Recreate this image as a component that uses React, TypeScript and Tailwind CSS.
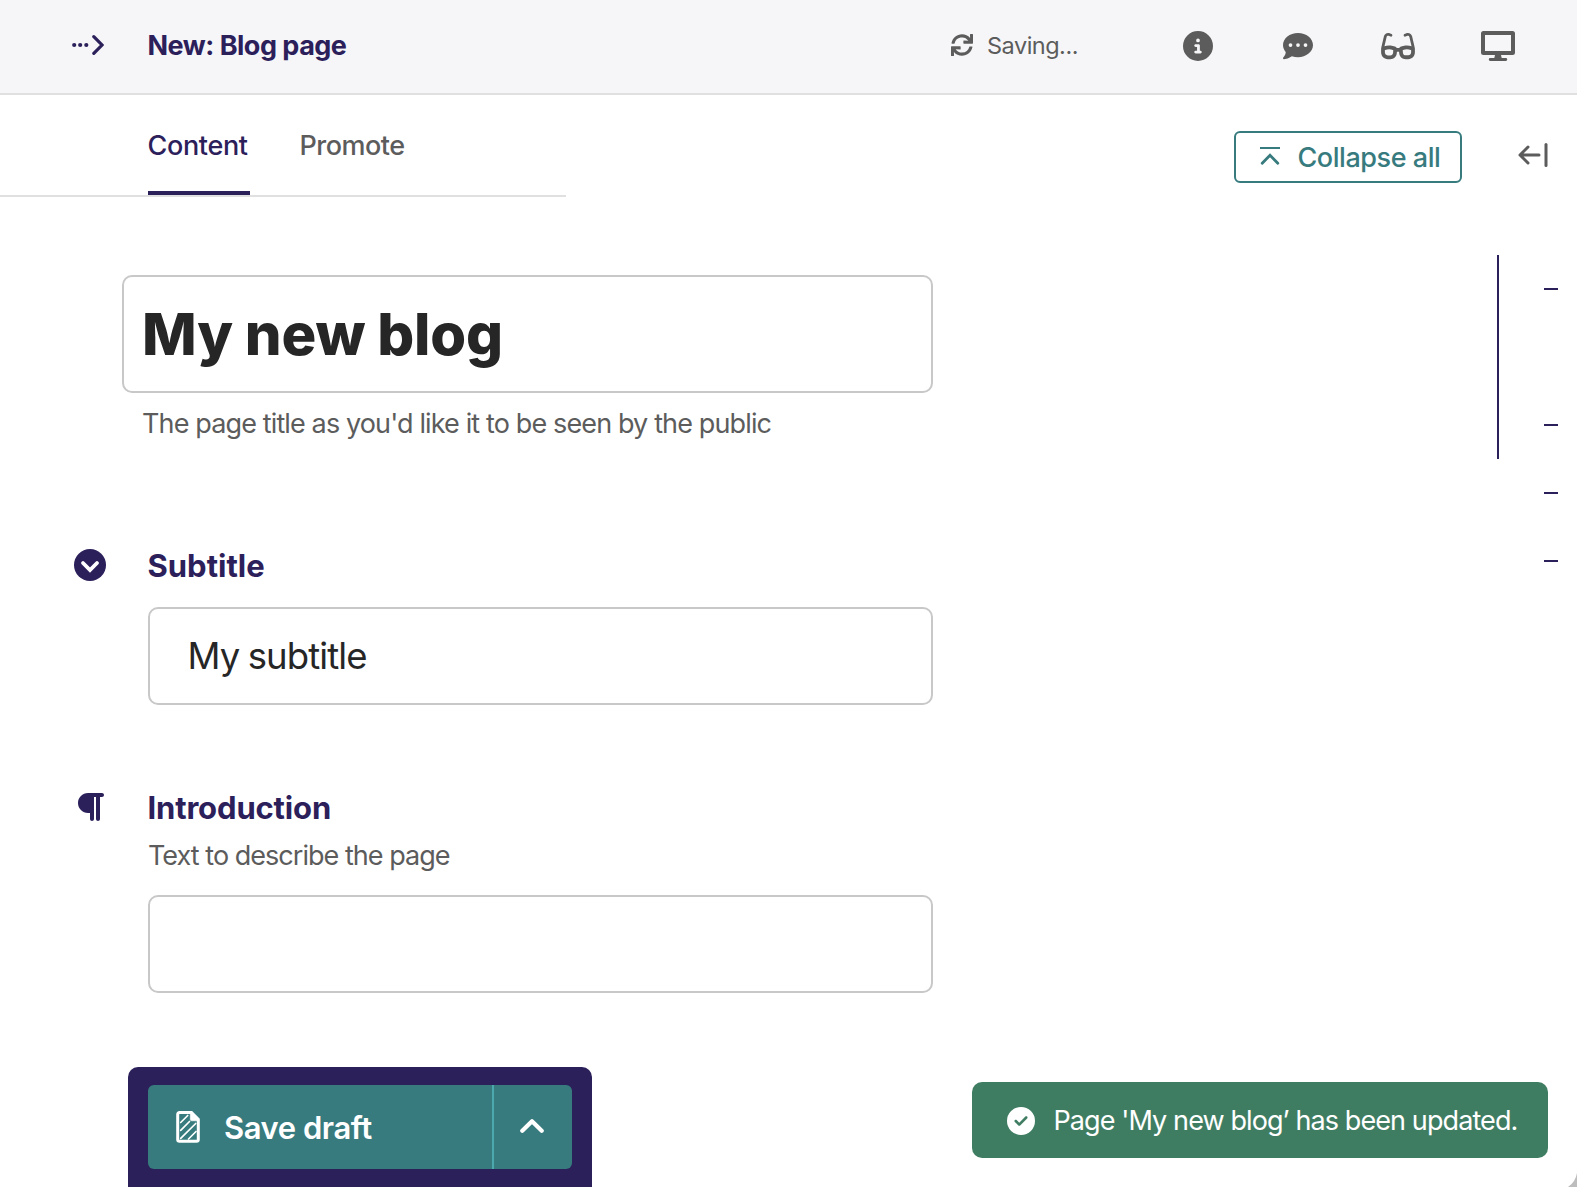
import type { ReactNode } from "react";
import { FaSync } from "react-icons/fa";
import {
  FaCircleCheck,
  FaCircleInfo,
  FaCommentDots,
  FaGlasses,
  FaParagraph,
} from "react-icons/fa6";

function BreadcrumbIcon() {
  return (
    <svg width="32" height="22" viewBox="0 0 32 22" fill="none">
      <circle cx="2.2" cy="11" r="2.1" fill="currentColor" />
      <circle cx="8.2" cy="11" r="2.1" fill="currentColor" />
      <circle cx="14.3" cy="11" r="2.1" fill="currentColor" />
      <path d="M21.8 2.7 30 11l-8.2 8.3" stroke="currentColor" strokeWidth="3.2" strokeLinecap="round" />
    </svg>
  );
}

function DesktopIcon() {
  return (
    <svg width="34" height="30" viewBox="0 0 34 30" fill="currentColor">
      <path
        fillRule="evenodd"
        d="M2.5 0h29A2.5 2.5 0 0 1 34 2.5v19a2.5 2.5 0 0 1-2.5 2.5H20l.7 3h4.1a1.3 1.3 0 0 1 0 2.9H9.2a1.3 1.3 0 0 1 0-2.9h4.1l.7-3H2.5A2.5 2.5 0 0 1 0 21.5v-19A2.5 2.5 0 0 1 2.5 0ZM4 4v16h26V4Z"
      />
    </svg>
  );
}

function CollapseIcon() {
  return (
    <svg width="20" height="20" viewBox="0 0 20 20" fill="none" stroke="currentColor">
      <path d="M0 1h20" strokeWidth="2" />
      <path d="m2.2 16.3 7.8-8 7.8 8" strokeWidth="2.8" strokeLinecap="round" />
    </svg>
  );
}

function ExpandLeftIcon() {
  return (
    <svg width="30" height="24" viewBox="0 0 30 24" fill="none" stroke="currentColor" strokeWidth="3" strokeLinecap="round" strokeLinejoin="round">
      <path d="M21 12H2M10 4 2 12l8 8" />
      <path d="M28 1.5v21" />
    </svg>
  );
}

function ChevronCircleIcon() {
  return (
    <svg width="32" height="32" viewBox="0 0 32 32">
      <circle cx="16" cy="16" r="16" fill="currentColor" />
      <path d="m9 14 7 7 7-7" fill="none" stroke="white" strokeWidth="3.8" strokeLinecap="round" />
    </svg>
  );
}

function DraftIcon() {
  return (
    <svg width="24" height="32" viewBox="0 0 24 32" fill="none" stroke="currentColor">
      <path d="M3.5 1.6h12l6.8 6.8v20a1.8 1.8 0 0 1-1.8 1.8h-17a1.8 1.8 0 0 1-1.8-1.8v-25a1.8 1.8 0 0 1 1.8-1.8Z" strokeWidth="3" />
      <path d="M14.3 2v6.3a1.5 1.5 0 0 0 1.5 1.5H23L16 1.5Z" fill="currentColor" strokeWidth=".6" />
      <path d="m4.7 11.5 7-7M4.7 19.3l8.8-8.8M4.7 27.3 19.7 12.5M12.5 28l7.5-7.5" strokeWidth="1.7" strokeLinecap="round" />
    </svg>
  );
}

function ChevronUpIcon() {
  return (
    <svg width="24" height="14" viewBox="0 0 24 14" fill="none">
      <path d="M2.3 11.7 12 2.3l9.7 9.4" stroke="currentColor" strokeWidth="4.2" strokeLinecap="round" strokeLinejoin="round" />
    </svg>
  );
}

function Heading({ icon, children, tracking }: { icon: ReactNode; children: ReactNode; tracking: string }) {
  return (
    <div className="flex h-10 items-center text-[#2c205b]">
      <div className="mb-0.5 ml-[74px] flex w-[73.5px] shrink-0">{icon}</div>
      <h2 className={`text-[31px] leading-10 font-bold ${tracking}`}>{children}</h2>
    </div>
  );
}

export default function App() {
  return (
    <div className="relative flex h-[1187px] w-full flex-col overflow-hidden bg-white font-['Inter',sans-serif] text-[#262626]">
      <header className="flex h-[95px] shrink-0 items-center border-b-2 border-[#e0e0e0] bg-[#f6f6f8] pb-px pl-[72px] text-[#5c5c5c]">
        <div className="mb-0.5 text-[#2c205b]">
          <BreadcrumbIcon />
        </div>
        <h1 className="mb-px ml-[43.5px] w-[803.5px] text-[27px] leading-9 font-bold tracking-[-0.5px] text-[#2c205b]">
          New: Blog page
        </h1>
        <div className="flex w-[232px] items-center gap-[14px]">
          <FaSync className="mb-0.5 size-[22px] shrink-0" />
          <span className="text-[23.5px] leading-8 tracking-[-0.5px]">Saving...</span>
        </div>
        <div className="flex items-center">
          <FaCircleInfo className="mb-px size-[30px]" />
          <FaCommentDots className="ml-[70px] size-[30px]" />
          <FaGlasses className="ml-[68px] h-[30px] w-[34px]" />
          <div className="ml-[66px]">
            <DesktopIcon />
          </div>
        </div>
      </header>

      <div className="flex min-h-0 flex-1 justify-between">
        <main className="flex w-[933px] flex-col">
          <nav className="flex h-[102px] w-[566px] shrink-0 gap-[49.5px] border-b-2 border-[#e0e0e0] pl-[148px] text-[27px] leading-[39px] font-medium">
            <a className="h-[100px] w-[102px] border-b-4 border-[#2c205b] pt-[31px] tracking-[-0.35px] text-[#2c205b]">
              <span className="-ml-[0.5px]">Content</span>
            </a>
            <a className="pt-[31px] tracking-[-0.5px] text-[#5c5c5c]">Promote</a>
          </nav>

          <section className="mt-[78px] ml-[122px]">
            <div className="flex h-[118px] items-center rounded-[10px] border-2 border-[#c8c8c8] pl-[18px] text-[58px] leading-none font-extrabold tracking-[-0.2px] [word-spacing:-0.5px]">
              My new blog
            </div>
            <p className="mt-[11px] ml-5 text-[27px] leading-10 tracking-[-0.87px] text-[#5c5c5c]">
              The page title as you'd like it to be seen by the public
            </p>
          </section>

          <section className="mt-[102px]">
            <Heading icon={<ChevronCircleIcon />} tracking="tracking-[0px]">Subtitle</Heading>
            <div className="mt-[21px] ml-[148px] flex h-[98px] items-center rounded-[10px] border-2 border-[#c8c8c8] pl-[37.5px] text-[36.5px] tracking-[-0.9px] [word-spacing:-1px]">
              My subtitle
            </div>
          </section>

          <section className="mt-[83px]">
            <Heading
              icon={<FaParagraph className="ml-[2px] h-8 w-7" />}
              tracking="tracking-[-0.15px]"
            >
              Introduction
            </Heading>
            <p className="mt-2 ml-[148px] text-[27px] leading-10 tracking-[-0.97px] text-[#5c5c5c]">
              Text to describe the page
            </p>
            <div className="mt-[19px] ml-[148px] h-[98px] rounded-[10px] border-2 border-[#c8c8c8]" />
          </section>

          <footer className="mt-auto ml-[128px] h-[120px] w-[464px] rounded-t-[10px] bg-[#2c205b] px-5 pt-[18px] text-white">
            <div className="flex h-[84px] overflow-hidden rounded-md bg-[#377b7e]">
              <button className="flex w-[344px] items-center pl-7 text-[31px] leading-10 font-semibold tracking-[-0.45px]">
                <DraftIcon />
                <span className="mt-0.5 ml-6">Save draft</span>
              </button>
              <button className="flex flex-1 items-center justify-center border-l-2 border-[#4ba9ad] pr-0.5 pb-0.5">
                <ChevronUpIcon />
              </button>
            </div>
          </footer>
        </main>

        <aside className="flex w-[605px] flex-col items-end">
          <div className="mt-9 mr-[29px] flex items-center">
            <button className="flex h-[52px] w-[228px] items-center rounded-md border-2 border-[#377b7e] pl-6 text-[27px] font-medium tracking-[-0.45px] whitespace-nowrap text-[#377b7e]">
              <CollapseIcon />
              <span className="mt-0.5 ml-[17.5px]">Collapse all</span>
            </button>
            <div className="mb-1 ml-14 text-[#5c5c5c]">
              <ExpandLeftIcon />
            </div>
          </div>

          <div className="mt-[72px] mr-[19px] flex gap-[45px] text-[#2c205b]">
            <div className="h-[204px] w-0.5 bg-current" />
            <div className="pt-[33px]">
              <div className="h-0.5 w-3.5 bg-current" />
              <div className="mt-[134px] h-0.5 w-3.5 bg-current" />
              <div className="mt-[66px] h-0.5 w-3.5 bg-current" />
              <div className="mt-[66px] h-0.5 w-3.5 bg-current" />
            </div>
          </div>

          <div className="mt-auto mr-[29px] mb-[29px] flex h-[76px] w-[576px] items-center rounded-[10px] bg-[#3f7d63] pt-px pl-[35px] whitespace-nowrap text-white">
            <FaCircleCheck className="mt-px size-7 shrink-0" />
            <span className="ml-[18.5px] text-[27px] leading-9 tracking-[-0.9px]">
              Page 'My new blog’ has been updated.
            </span>
          </div>
        </aside>
      </div>

      <svg className="absolute right-0 bottom-0 text-[#bdbdbd]" width="9" height="14" viewBox="0 0 9 14">
        <path d="M9 0Q7.500 9 0 14h9Z" fill="currentColor" />
      </svg>
    </div>
  );
}
